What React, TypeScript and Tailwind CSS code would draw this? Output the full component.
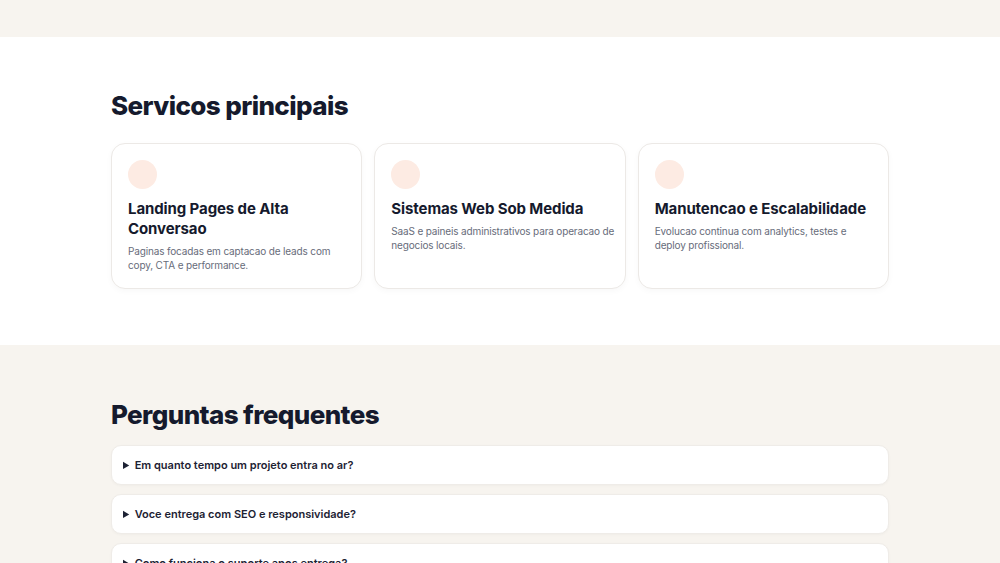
const services = [
  {
    title: 'Landing Pages de Alta Conversao',
    text: 'Paginas focadas em captacao de leads com copy, CTA e performance.',
  },
  {
    title: 'Sistemas Web Sob Medida',
    text: 'SaaS e paineis administrativos para operacao de negocios locais.',
  },
  {
    title: 'Manutencao e Escalabilidade',
    text: 'Evolucao continua com analytics, testes e deploy profissional.',
  },
];

const faqs = [
  'Em quanto tempo um projeto entra no ar?',
  'Voce entrega com SEO e responsividade?',
  'Como funciona o suporte apos entrega?',
];

export default function App() {
  return (
    <div className="min-h-screen bg-[#f7f4ef] font-['Inter',sans-serif] text-[#151a2d]">
      <div className="h-[37px]" />

      {/* Servicos */}
      <section className="bg-white pt-[52px] pb-[56px]">
        <div className="mx-auto w-[778px]">
          <h2 className="mb-[20px] text-[26px] font-extrabold leading-[34px] tracking-[-0.6px]">
            Servicos principais
          </h2>
          <div className="grid grid-cols-3 gap-3">
            {services.map((s) => (
              <div
                key={s.title}
                className="h-[146px] rounded-[14px] border border-[#ece9e6] bg-white pl-[16px] pr-[10px] pt-[16px] shadow-[0_2px_6px_rgba(0,0,0,0.03)]"
              >
                <div className="h-[29px] w-[29px] rounded-full bg-[#fdebe3]" />
                <h3 className="mt-[10px] text-[15px] font-bold leading-[20px] tracking-[-0.1px]">
                  {s.title}
                </h3>
                <p className="mt-[5px] text-[10px] leading-[14px] tracking-[-0.15px] text-[#676c7a]">
                  {s.text}
                </p>
              </div>
            ))}
          </div>
        </div>
      </section>

      {/* FAQ */}
      <section className="pt-[53px]">
        <div className="mx-auto w-[778px]">
          <h2 className="mb-[13px] text-[26px] font-extrabold leading-[34px] tracking-[-0.6px]">
            Perguntas frequentes
          </h2>
          <div className="flex flex-col gap-[9px]">
            {faqs.map((q) => (
              <details
                key={q}
                className="rounded-[10px] border border-[#efece8] bg-white px-[11px] shadow-[0_1px_3px_rgba(0,0,0,0.03)]"
              >
                <summary className="cursor-pointer py-[11px] text-[11px] font-semibold leading-[16px] text-[#1d2233]">
                  {q}
                </summary>
              </details>
            ))}
          </div>
        </div>
      </section>
    </div>
  );
}
